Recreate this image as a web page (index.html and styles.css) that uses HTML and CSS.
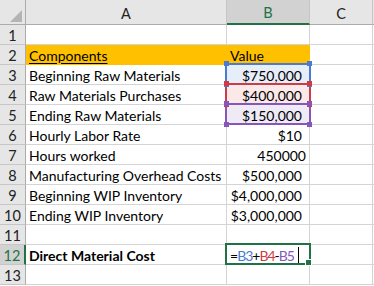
FILE: index.html
```html
<!DOCTYPE html>
<html>
<head>
<meta charset="utf-8">
<link rel="stylesheet" href="styles.css">
</head>
<body>
<div class="sheet">
  <div class="hd corner"><span class="tri"></span></div>
  <div class="hd col">A</div>
  <div class="hd col sel">B</div>
  <div class="hd col">C</div>
  <div class="hd col tail"></div>

  <div class="hd row">1</div><div class="c"></div><div class="c"></div><div class="c"></div><div class="c tail"></div>

  <div class="hd row">2</div><div class="c fill"><u>Components</u></div><div class="c fill"><u>Value</u></div><div class="c"></div><div class="c tail"></div>

  <div class="hd row">3</div><div class="c">Beginning Raw Materials</div><div class="c num cur ref blue">$750,000</div><div class="c"></div><div class="c tail"></div>

  <div class="hd row">4</div><div class="c">Raw Materials Purchases</div><div class="c num cur ref red">$400,000</div><div class="c"></div><div class="c tail"></div>

  <div class="hd row">5</div><div class="c">Ending Raw Materials</div><div class="c num cur ref purple">$150,000</div><div class="c"></div><div class="c tail"></div>

  <div class="hd row">6</div><div class="c">Hourly Labor Rate</div><div class="c num cur">$10</div><div class="c"></div><div class="c tail"></div>

  <div class="hd row">7</div><div class="c">Hours worked</div><div class="c num">450000</div><div class="c"></div><div class="c tail"></div>

  <div class="hd row">8</div><div class="c">Manufacturing Overhead Costs</div><div class="c num cur">$500,000</div><div class="c"></div><div class="c tail"></div>

  <div class="hd row">9</div><div class="c">Beginning WIP Inventory</div><div class="c num cur">$4,000,000</div><div class="c"></div><div class="c tail"></div>

  <div class="hd row">10</div><div class="c">Ending WIP Inventory</div><div class="c num cur">$3,000,000</div><div class="c"></div><div class="c tail"></div>

  <div class="hd row">11</div><div class="c"></div><div class="c"></div><div class="c"></div><div class="c tail"></div>

  <div class="hd row sel">12</div><div class="c bold">Direct Material Cost</div><div class="c active"><span class="k">=</span><span class="fb">B3</span><span class="k">+</span><span class="fr">B4</span><span class="k">-</span><span class="fp">B5</span><span class="caret"></span></div><div class="c"></div><div class="c tail"></div>

  <div class="hd row">13</div><div class="c"></div><div class="c"></div><div class="c"></div><div class="c tail"></div>
</div>
</body>
</html>
```

FILE: styles.css
```css
* { box-sizing: border-box; }
html, body { margin: 0; padding: 0; background: #fff; }
body { font-family: "Lato", "Liberation Sans", sans-serif; font-size: 14px; color: #000; overflow: hidden; }

.sheet {
  display: grid;
  grid-template-columns: 26px 201px 83px 63px 1fr;
  grid-template-rows: 25px repeat(13, 20px);
  width: 374px;
}

.hd {
  background: #e6e6e6;
  color: #222;
  display: flex;
  align-items: center;
  justify-content: center;
  font-size: 14.5px;
}
.corner { border-right: 1px solid #ababab; border-bottom: 1px solid #ababab; position: relative; }
.tri {
  position: absolute; left: 10px; top: 10px;
  width: 0; height: 0;
  border-left: 12px solid transparent;
  border-bottom: 12px solid #b4b4b4;
}
.col { border-right: 1px solid #c6c6c6; border-bottom: 1px solid #ababab; padding-top: 2px; }
.col.tail { border-right: none; }
.col.sel { background: #d2d2d2; color: #217346; border-bottom: 2px solid #217346; }
.row { border-right: 1px solid #ababab; border-bottom: 1px solid #c6c6c6; padding-top: 1px; }
.row.sel { background: #d2d2d2; color: #217346; border-right: 2px solid #217346; }

.c {
  border-right: 1px solid #d4d4d4;
  border-bottom: 1px solid #d4d4d4;
  padding: 1px 2px 0 3px;
  display: flex;
  align-items: center;
  white-space: nowrap;
  position: relative;
}
.c.tail { border-right: none; }
.fill { background: #ffc000; border-color: #ffc000; }
.fill u { text-underline-offset: 2px; }
.num { justify-content: flex-end; padding-right: 3px; }
.num.cur { padding-right: 7px; }
.bold { font-weight: bold; }

.ref.blue { background: #e6eef9; }
.ref.red { background: #fbe8e8; }
.ref.purple { background: #eeeaf6; }
.ref::after {
  content: ""; position: absolute;
  left: -2px; top: -2px; right: -2px; bottom: -1px;
  border: 2px solid; pointer-events: none;
}
.ref.blue::after { border-color: #4a7bd0; }
.ref.red::after { border-color: #cc3b46; z-index: 1; }
.ref.purple::after { border-color: #8656bb; z-index: 2; }
.ref::before {
  content: ""; position: absolute; left: -3px; top: -4px; right: -3px; bottom: -3px; z-index: 3;
  --h: #4a7bd0;
  background:
    linear-gradient(var(--h), var(--h)) left top / 5px 5px no-repeat,
    linear-gradient(var(--h), var(--h)) right top / 5px 5px no-repeat,
    linear-gradient(var(--h), var(--h)) left bottom / 5px 5px no-repeat,
    linear-gradient(var(--h), var(--h)) right bottom / 5px 5px no-repeat;
}
.ref.red::before { --h: #cc3b46; }
.ref.purple::before { --h: #8656bb; }

.active { padding-left: 3px; letter-spacing: -1px; }
.active::after {
  content: ""; position: absolute; left: -2px; top: -2px; right: -2px; bottom: -1px;
  border: 2px solid #217346;
}
.active::before {
  content: ""; position: absolute; right: -3px; bottom: -2px; width: 5px; height: 5px;
  background: #217346; border: 1px solid #fff; z-index: 2;
}
.k { color: #000; }
.fb { color: #4a7bd0; }
.fr { color: #cc3b46; }
.fp { color: #8656bb; }
.caret { display: inline-block; width: 1px; height: 16px; background: #000; margin-left: 4px; }
```
